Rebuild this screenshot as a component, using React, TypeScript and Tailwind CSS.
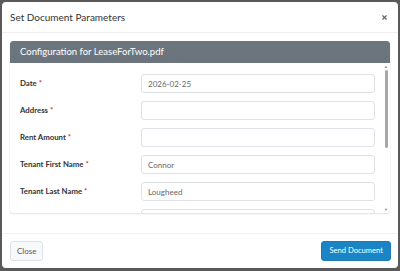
import { X } from "lucide-react";

const fields = [
  { label: "Date", value: "2026-02-25" },
  { label: "Address", value: "" },
  { label: "Rent Amount", value: "" },
  { label: "Tenant First Name", value: "Connor" },
  { label: "Tenant Last Name", value: "Lougheed" },
  { label: "", value: "" },
];

export default function App() {
  return (
    <div className="w-[400px] h-[271px] bg-[#5a5a5a] pt-[2px] pl-[2px] pr-[2px] pb-[3px] font-['Lato',sans-serif]">
      <div className="h-full bg-white rounded-[4px] flex flex-col overflow-hidden">
        {/* header */}
        <div className="h-[31px] flex items-center justify-between pl-[8px] pr-[10px] border-b border-[#eef0f2]">
          <h1 className="text-[10px] text-[#333] leading-none">Set Document Parameters</h1>
          <X className="w-[7px] h-[7px] text-[#666]" strokeWidth={4} />
        </div>

        {/* body */}
        <div className="flex-1 px-[8px] pt-[8px]">
          <div className="h-[172px] rounded-[3px] shadow-[0_1px_2px_rgba(0,0,0,0.12)] flex flex-col overflow-hidden">
            <div className="h-[22px] bg-[#6c757d] rounded-t-[3px] flex items-center pl-[10px]">
              <span className="text-[9.5px] text-white leading-none">Configuration for LeaseForTwo.pdf</span>
            </div>
            <div className="flex-1 flex min-h-0">
              <div className="flex-1 overflow-hidden pt-[11px] pl-[10px] pr-[7px]">
                <div className="flex flex-col gap-[8px]">
                  {fields.map((f, i) => (
                    <div key={i} className="flex items-center h-[19px]">
                      <label className="w-[121px] text-[7.8px] font-bold text-[#333]">
                        {f.label && (
                          <>
                            {f.label} <span className="text-[#dc3545]">*</span>
                          </>
                        )}
                      </label>
                      <div className="flex-1 h-[19px] border border-[#dee2e6] rounded-[3px] flex items-center px-[6px] text-[8px] text-[#666]">
                        {f.value}
                      </div>
                    </div>
                  ))}
                </div>
              </div>
              {/* scrollbar */}
              <div className="w-[8px] flex flex-col items-center py-[1px]">
                <span className="text-[4px] leading-[5px] text-[#888]">▲</span>
                <div className="flex-1 w-[3px] flex flex-col pt-[1px]">
                  <div className="h-[78px] bg-[#a8a8a8] rounded-full" />
                </div>
                <span className="text-[4px] leading-[5px] text-[#888]">▼</span>
              </div>
            </div>
          </div>
        </div>

        {/* footer */}
        <div className="h-[35px] border-t border-[#eef0f2] flex items-center justify-between pl-[8px] pr-[7px]">
          <button className="h-[20px] px-[6px] text-[8px] text-[#555] bg-[#f8f9fa] border border-[#dee2e6] rounded-[3px]">
            Close
          </button>
          <button className="h-[20px] px-[7px] text-[7.6px] text-white bg-[#1b84c4] border border-[#1a7bb6] rounded-[3px]">
            Send Document
          </button>
        </div>
      </div>
    </div>
  );
}
